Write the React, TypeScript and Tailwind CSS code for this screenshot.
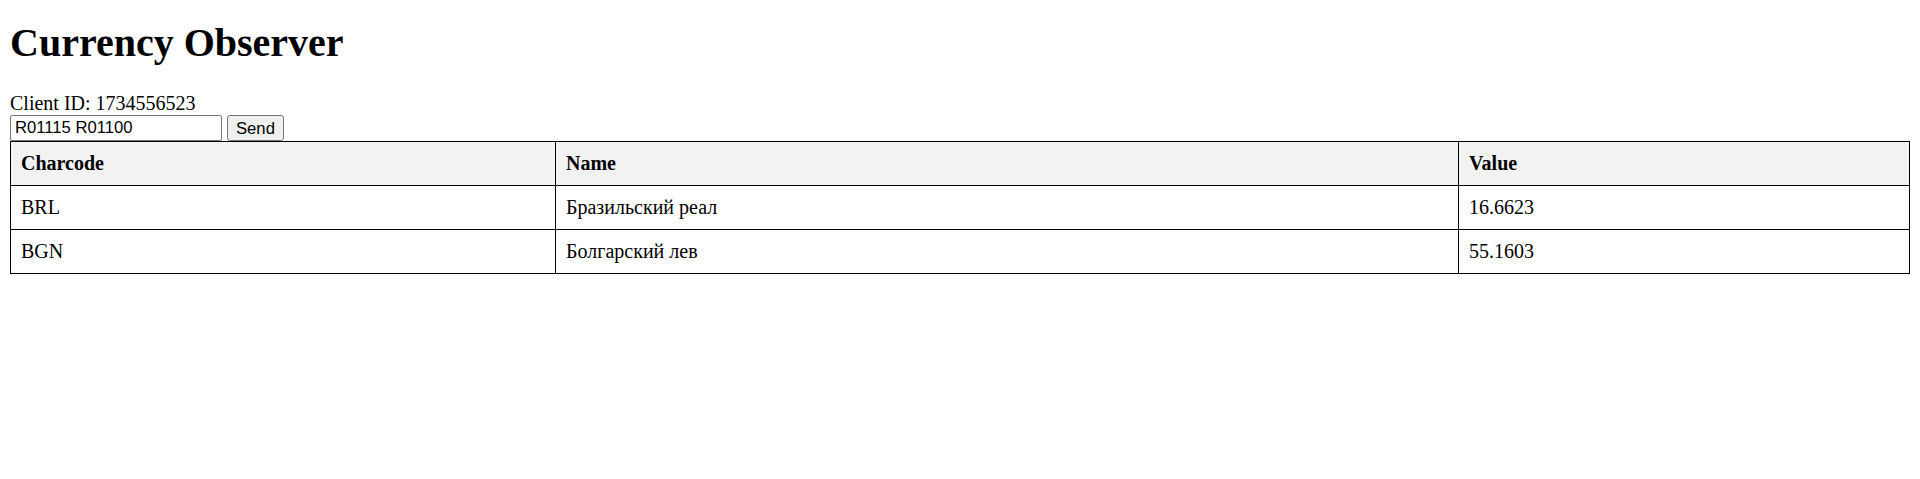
import { useState } from 'react';

const rows = [
  { code: 'BRL', name: 'Бразильский реал', value: '16.6623' },
  { code: 'BGN', name: 'Болгарский лев', value: '55.1603' },
];

export default function App() {
  const [ids, setIds] = useState('R01115 R01100');

  return (
    <div className="min-h-screen bg-white px-[10px] text-black font-['Liberation_Serif',serif]">
      <h1 className="mt-[20px] mb-[26px] text-[40px] font-bold leading-[46px]">Currency Observer</h1>
      <div className="text-[20px] leading-[23px]">Client ID: 1734556523</div>
      <div className="flex items-center gap-[5px]">
        <input
          value={ids}
          onChange={(e) => setIds(e.target.value)}
          className="h-[26px] w-[212px] rounded-[2px] border border-[#767676] px-[4px] font-['Liberation_Sans',sans-serif] text-[16.67px] outline-none"
        />
        <button className="h-[26px] rounded-[3px] border border-[#767676] bg-[#efefef] px-[8px] font-['Liberation_Sans',sans-serif] text-[16.67px]">
          Send
        </button>
      </div>
      <table className="w-full table-fixed border-collapse text-[20px] leading-[23px]">
        <colgroup>
          <col className="w-[545px]" />
          <col className="w-[903px]" />
          <col />
        </colgroup>
        <thead>
          <tr className="bg-[#f2f2f2]">
            <th className="border border-black px-[10px] py-[10px] text-left font-bold">Charcode</th>
            <th className="border border-black px-[10px] py-[10px] text-left font-bold">Name</th>
            <th className="border border-black px-[10px] py-[10px] text-left font-bold">Value</th>
          </tr>
        </thead>
        <tbody>
          {rows.map((r) => (
            <tr key={r.code}>
              <td className="border border-black px-[10px] py-[10px]">{r.code}</td>
              <td className="border border-black px-[10px] py-[10px]">{r.name}</td>
              <td className="border border-black px-[10px] py-[10px]">{r.value}</td>
            </tr>
          ))}
        </tbody>
      </table>
    </div>
  );
}
